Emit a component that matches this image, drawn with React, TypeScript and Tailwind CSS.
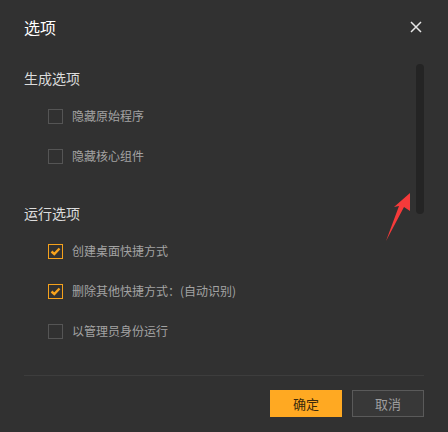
import React from "react";

const font = { fontFamily: '"Noto Sans CJK SC", "Noto Sans", sans-serif' };

function Box({ checked }: { checked?: boolean }) {
  return checked ? (
    <div className="w-[15px] h-[15px] border border-[#f5a11c] flex items-center justify-center">
      <svg width="11" height="11" viewBox="0 0 11 11">
        <path d="M1.5 5.5 L4.3 8 L9.5 2.5" stroke="#f5a11c" strokeWidth="2.4" fill="none" />
      </svg>
    </div>
  ) : (
    <div className="w-[15px] h-[15px] border border-[#555555]" />
  );
}

function Row({ label, checked }: { label: string; checked?: boolean }) {
  return (
    <div className="h-[40px] flex items-center pl-[48px] gap-[9px]">
      <Box checked={checked} />
      <span className="text-[12px] text-[#a3a3a3] leading-none">{label}</span>
    </div>
  );
}

export default function App() {
  return (
    <div className="w-[448px] h-[432px] bg-[#313131] relative overflow-hidden" style={font}>
      <div className="h-[54px] flex items-center justify-between pl-6 pr-[26px]">
        <span className="text-[16px] text-white leading-none">选项</span>
        <svg width="12" height="12" viewBox="0 0 12 12">
          <path d="M1 1 L11 11 M11 1 L1 11" stroke="#e6e6e6" strokeWidth="1.5" />
        </svg>
      </div>
      <div className="mt-[14px] h-[20px] flex items-center pl-6 text-[14px] text-[#dcdcdc]">生成选项</div>
      <div className="mt-[8px]">
        <Row label="隐藏原始程序" />
        <Row label="隐藏核心组件" />
      </div>
      <div className="mt-[27px] h-[20px] flex items-center pl-6 text-[14px] text-[#dcdcdc]">运行选项</div>
      <div className="mt-[8px]">
        <Row label="创建桌面快捷方式" checked />
        <Row label="删除其他快捷方式：(自动识别)" checked />
        <Row label="以管理员身份运行" />
      </div>
      <div className="mt-[24px] mx-6 h-px bg-[#3d3d3d]" />
      <div className="mt-[14px] flex justify-end gap-[10px] pr-6">
        <button className="w-[72px] h-[27px] bg-[#ffa922] text-[#3a2a0c] text-[13px] flex items-center justify-center">
          确定
        </button>
        <button className="w-[72px] h-[27px] bg-[#383838] border border-[#5a5a5a] text-[#9e9e9e] text-[13px] flex items-center justify-center">
          取消
        </button>
      </div>
      <div className="absolute left-[416px] top-[64px] w-[8px] h-[150px] rounded-full bg-[#242424]" />
      <svg className="absolute left-0 top-0" width="448" height="432" viewBox="0 0 448 432">
        <polygon points="410,193 410,211 404,207 386,241 399,206 394,207" fill="#f53a3a" />
      </svg>
    </div>
  );
}
